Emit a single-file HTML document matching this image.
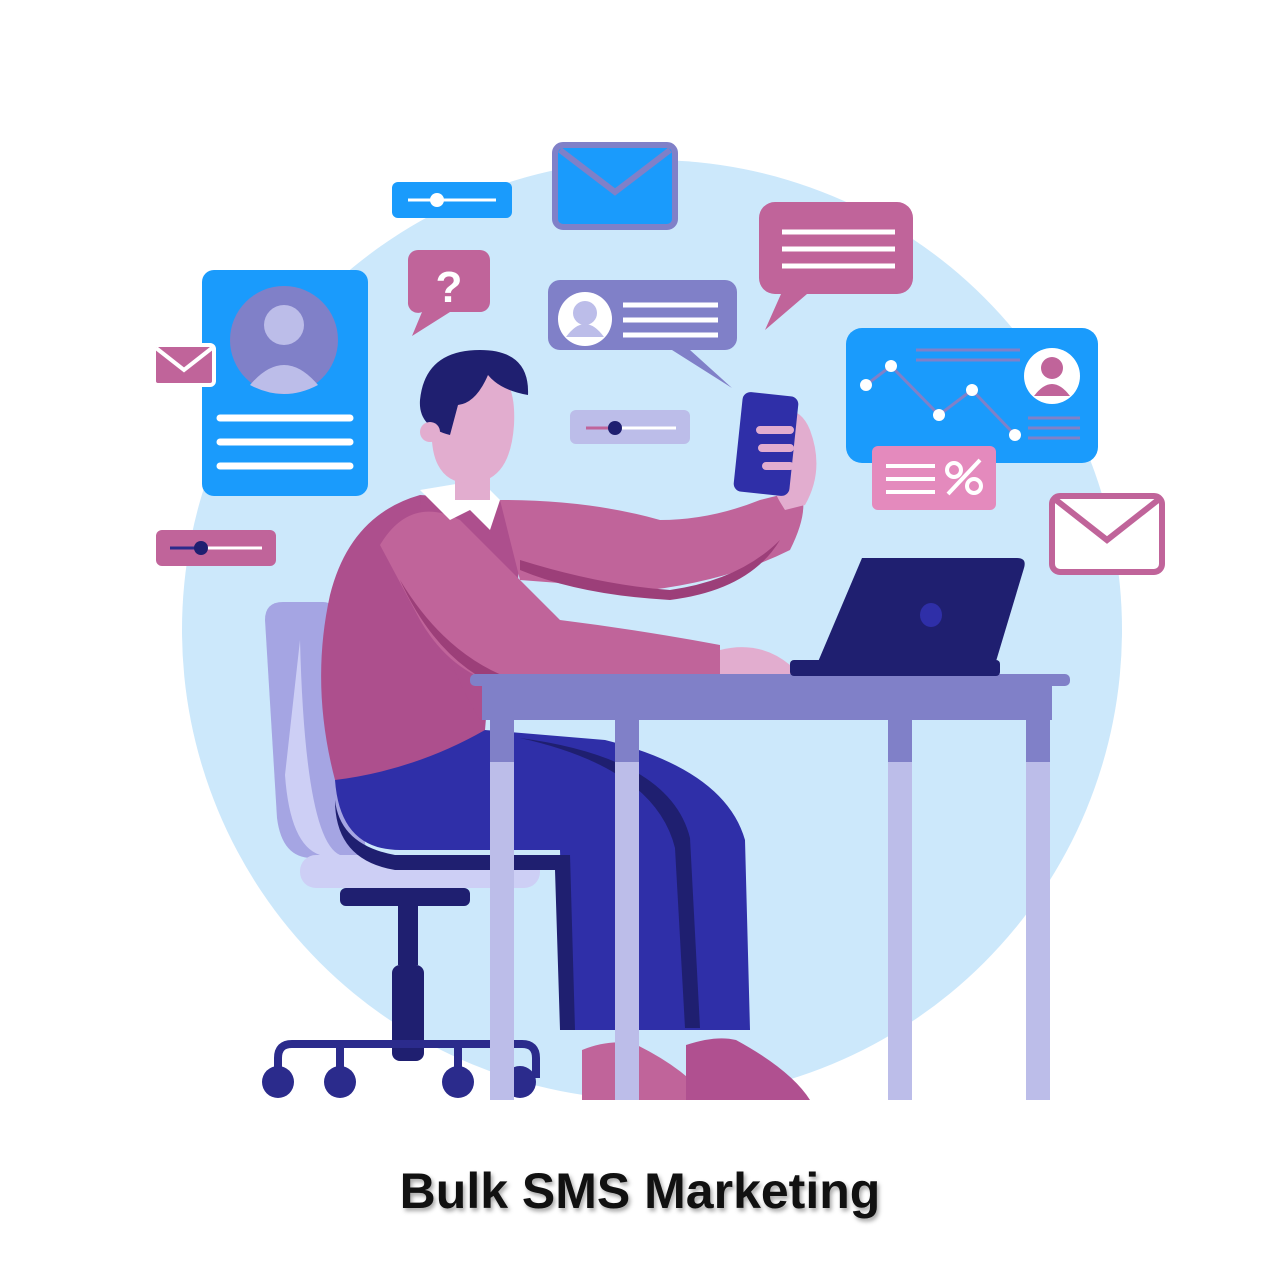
<!DOCTYPE html>
<html><head><meta charset="utf-8"><style>
html,body{margin:0;padding:0;background:#fff;width:1280px;height:1280px;overflow:hidden}
svg{position:absolute;left:0;top:0}
.t{position:absolute;left:0;width:1280px;top:1162px;text-align:center;font-family:"Liberation Sans",sans-serif;font-size:50px;font-weight:600;color:#111;text-shadow:2px 3px 4px rgba(0,0,0,.35)}
</style></head><body>
<svg width="1280" height="1280" viewBox="0 0 1280 1280">
<defs><clipPath id="c"><rect x="0" y="0" width="1280" height="1100"/></clipPath></defs>
<circle cx="652" cy="630" r="470" fill="#cce8fb" clip-path="url(#c)"/>
<rect x="555" y="145" width="120" height="82" rx="8" fill="#1a9bfc" stroke="#8080c8" stroke-width="6"/>
<path d="M560 150 L615 192 L670 150" fill="none" stroke="#8080c8" stroke-width="6"/>
<rect x="392" y="182" width="120" height="36" rx="6" fill="#1a9bfc"/>
<line x1="408" y1="200" x2="496" y2="200" stroke="#fff" stroke-width="3"/>
<circle cx="437" cy="200" r="7" fill="#fff"/>
<path d="M418 250 h62 a10 10 0 0 1 10 10 v42 a10 10 0 0 1-10 10 h-30 l-38 24 l10-24 a10 10 0 0 1-14-10 v-42 a10 10 0 0 1 10-10z" fill="#c0649a"/>
<text x="449" y="302" font-family="Liberation Sans" font-size="44" font-weight="bold" fill="#fff" text-anchor="middle">?</text>
<rect x="202" y="270" width="166" height="226" rx="12" fill="#1a9bfc"/>
<circle cx="284" cy="340" r="54" fill="#8080c8"/>
<circle cx="284" cy="325" r="20" fill="#bcbde9"/>
<path d="M250 385 q34-40 68 0 q-34 18-68 0z" fill="#bcbde9"/>
<g stroke="#fff" stroke-width="7" stroke-linecap="round"><line x1="220" y1="418" x2="350" y2="418"/><line x1="220" y1="442" x2="350" y2="442"/><line x1="220" y1="466" x2="350" y2="466"/></g>
<rect x="154" y="345" width="60" height="40" rx="4" fill="#c0649a" stroke="#fff" stroke-width="4"/>
<path d="M156 348 L184 370 L212 348" fill="none" stroke="#fff" stroke-width="4"/>
<rect x="156" y="530" width="120" height="36" rx="6" fill="#c0649a"/>
<line x1="170" y1="548" x2="262" y2="548" stroke="#fff" stroke-width="3"/>
<line x1="170" y1="548" x2="200" y2="548" stroke="#2b2b8c" stroke-width="3"/>
<circle cx="201" cy="548" r="7" fill="#1f1f70"/>
<path d="M560 280 h165 a12 12 0 0 1 12 12 v46 a12 12 0 0 1-12 12 h-35 l42 38 l-60-38 h-112 a12 12 0 0 1-12-12 v-46 a12 12 0 0 1 12-12z" fill="#8080c8"/>
<circle cx="585" cy="319" r="27" fill="#fff"/>
<circle cx="585" cy="313" r="12" fill="#bcbde9"/>
<path d="M566 337 q19-26 38 0z" fill="#bcbde9"/>
<g stroke="#fff" stroke-width="5"><line x1="623" y1="305" x2="718" y2="305"/><line x1="623" y1="320" x2="718" y2="320"/><line x1="623" y1="335" x2="718" y2="335"/></g>
<rect x="570" y="410" width="120" height="34" rx="6" fill="#bcbde9"/>
<line x1="586" y1="428" x2="676" y2="428" stroke="#fff" stroke-width="3"/>
<line x1="586" y1="428" x2="614" y2="428" stroke="#c0649a" stroke-width="3"/>
<circle cx="615" cy="428" r="7" fill="#1f1f70"/>
<path d="M775 202 h122 a16 16 0 0 1 16 16 v60 a16 16 0 0 1-16 16 h-90 l-42 36 l16-36 h-6 a16 16 0 0 1-16-16 v-60 a16 16 0 0 1 16-16z" fill="#c0649a"/>
<g stroke="#fff" stroke-width="5"><line x1="782" y1="232" x2="895" y2="232"/><line x1="782" y1="249" x2="895" y2="249"/><line x1="782" y1="266" x2="895" y2="266"/></g>
<rect x="846" y="328" width="252" height="135" rx="16" fill="#1a9bfc"/>
<g stroke="#8080c8" stroke-width="3"><line x1="916" y1="350" x2="1020" y2="350"/><line x1="916" y1="360" x2="1020" y2="360"/><line x1="1028" y1="418" x2="1080" y2="418"/><line x1="1028" y1="428" x2="1080" y2="428"/><line x1="1028" y1="438" x2="1080" y2="438"/></g>
<polyline points="866,385 891,366 939,415 972,390 1015,435" fill="none" stroke="#8080c8" stroke-width="3"/>
<g fill="#fff"><circle cx="866" cy="385" r="6"/><circle cx="891" cy="366" r="6"/><circle cx="939" cy="415" r="6"/><circle cx="972" cy="390" r="6"/><circle cx="1015" cy="435" r="6"/></g>
<circle cx="1052" cy="376" r="28" fill="#fff"/>
<circle cx="1052" cy="368" r="11" fill="#c0649a"/>
<path d="M1034 396 q18-24 36 0z" fill="#c0649a"/>
<rect x="872" y="446" width="124" height="64" rx="6" fill="#e48abd"/>
<g stroke="#fff" stroke-width="4"><line x1="886" y1="466" x2="935" y2="466"/><line x1="886" y1="479" x2="935" y2="479"/><line x1="886" y1="492" x2="935" y2="492"/><line x1="948" y1="494" x2="980" y2="460"/></g>
<circle cx="954" cy="470" r="7" fill="none" stroke="#fff" stroke-width="4"/><circle cx="974" cy="486" r="7" fill="none" stroke="#fff" stroke-width="4"/>
<rect x="1052" y="496" width="110" height="76" rx="8" fill="#fff" stroke="#c0649a" stroke-width="6"/>
<path d="M1056 500 L1107 540 L1158 500" fill="none" stroke="#c0649a" stroke-width="6"/>
<!-- chair -->
<path d="M265 620 q0-18 18-18 h40 q12 0 14 16 l30 240 h-55 q-30 0-35-40z" fill="#a5a5e3"/>
<path d="M300 640 q5 200 40 215 h-20 q-30-10-35-80z" fill="#cdcff5"/>
<rect x="300" y="855" width="240" height="33" rx="16" fill="#cdcff5"/>
<rect x="340" y="888" width="130" height="18" rx="6" fill="#1f1f70"/>
<rect x="398" y="905" width="20" height="60" fill="#1f1f70"/>
<rect x="392" y="965" width="32" height="96" rx="8" fill="#1f1f70"/>
<path d="M278 1078 v-20 q0-14 14-14 h230 q14 0 14 14 v20" fill="none" stroke="#2b2b8c" stroke-width="8"/>
<line x1="340" y1="1044" x2="340" y2="1078" stroke="#2b2b8c" stroke-width="8"/>
<line x1="458" y1="1044" x2="458" y2="1078" stroke="#2b2b8c" stroke-width="8"/>
<g fill="#2b2b8c"><circle cx="278" cy="1082" r="16"/><circle cx="340" cy="1082" r="16"/><circle cx="458" cy="1082" r="16"/><circle cx="520" cy="1082" r="16"/></g>
<!-- shoes -->
<path d="M582 1050 q30-12 55 -5 q50 25 72 55 h-127z" fill="#c0649a"/>
<path d="M686 1045 q30-10 50-5 q55 30 74 60 h-124z" fill="#b05090"/>
<!-- pants -->
<path d="M335 780 q20-40 150-50 l120 10 q120 30 140 100 l5 190 h-185 l-5-180 h-160 q-60 0-65-70z" fill="#2f2fa8"/>
<path d="M335 800 q5 45 60 55 h175 l5 175 h-15 l-5-160 h-160 q-60-10-60-70z" fill="#1f1f70"/>
<path d="M520 738 q150 20 170 100 l10 190 h-15 l-10-180 q-20-80-155-110z" fill="#1f1f70"/>
<!-- torso -->
<path d="M420 495 q-70 20-90 100 q-20 90 5 185 q80-10 150-50 l5-60 l-60-140z" fill="#ad4f8d"/>
<path d="M420 495 l80 5 l20 50 l-10 150 l-30 20 q-60-100-60-225z" fill="#ad4f8d"/>
<!-- raised arm -->
<path d="M500 500 q90 0 160 20 q50 0 100-20 l40-10 q10 20-10 60 q-60 30-140 40 l-130 -10z" fill="#c0649a"/>
<path d="M520 560 q80 25 150 30 q70-10 110-50 q-30 50-110 60 q-90-5-150-30z" fill="#9c3f79"/>
<!-- forearm on desk -->
<path d="M380 545 q30-50 80-25 q60 60 100 100 q80 10 160 25 v45 l-180 0 q-80 0-120-70z" fill="#c0649a"/>
<path d="M400 580 q60 100 160 110 l150 5 v5 l-160 0 q-100-10-150-120z" fill="#9c3f79"/>
<path d="M720 650 q40-10 70 15 q20 20-5 30 l-65-5z" fill="#e2adcf"/>
<path d="M420 490 l30 30 l20-10 l20 20 l10-30 l-20-20z" fill="#fff"/>
<!-- hand phone -->
<path d="M775 410 q25-5 35 20 q15 40-5 75 l-20 5 q-20-30-20-60z" fill="#e2adcf"/>
<rect x="738" y="394" width="56" height="100" rx="8" fill="#2f2fa8" transform="rotate(6 766 444)"/>
<path d="M760 430 h30 M762 448 h28 M766 466 h24" stroke="#e2adcf" stroke-width="8" stroke-linecap="round"/>
<!-- head -->
<rect x="455" y="470" width="35" height="30" fill="#e2adcf"/>
<path d="M432 420 q0-55 50-55 q35 5 32 60 q-3 45-28 55 q-35 10-48-15 q-8-15-6-45z" fill="#e2adcf"/>
<path d="M420 400 q5-50 60-50 q50 0 48 45 q-28-5-40-20 q-12 28-30 30 l-8 30 q-32-8-30-35z" fill="#1f1f70"/>
<circle cx="430" cy="432" r="10" fill="#e2adcf"/>
<!-- table -->
<rect x="470" y="674" width="600" height="12" rx="5" fill="#8080c8"/>
<rect x="482" y="682" width="570" height="38" fill="#8080c8"/>
<g fill="#bcbde9"><rect x="490" y="720" width="24" height="380"/><rect x="615" y="720" width="24" height="380"/><rect x="888" y="720" width="24" height="380"/><rect x="1026" y="720" width="24" height="380"/></g>
<g fill="#8080c8"><rect x="490" y="720" width="24" height="42"/><rect x="615" y="720" width="24" height="42"/><rect x="888" y="720" width="24" height="42"/><rect x="1026" y="720" width="24" height="42"/></g>
<!-- laptop -->
<path d="M862 558 h155 q10 0 7 10 l-30 100 q-3 8-12 8 h-170 z" fill="#1f1f70"/>
<rect x="790" y="660" width="210" height="16" rx="4" fill="#1f1f70"/>
<ellipse cx="931" cy="615" rx="11" ry="12" fill="#2f2fa8"/>
</svg>
<div class="t">Bulk SMS Marketing</div>
</body></html>
